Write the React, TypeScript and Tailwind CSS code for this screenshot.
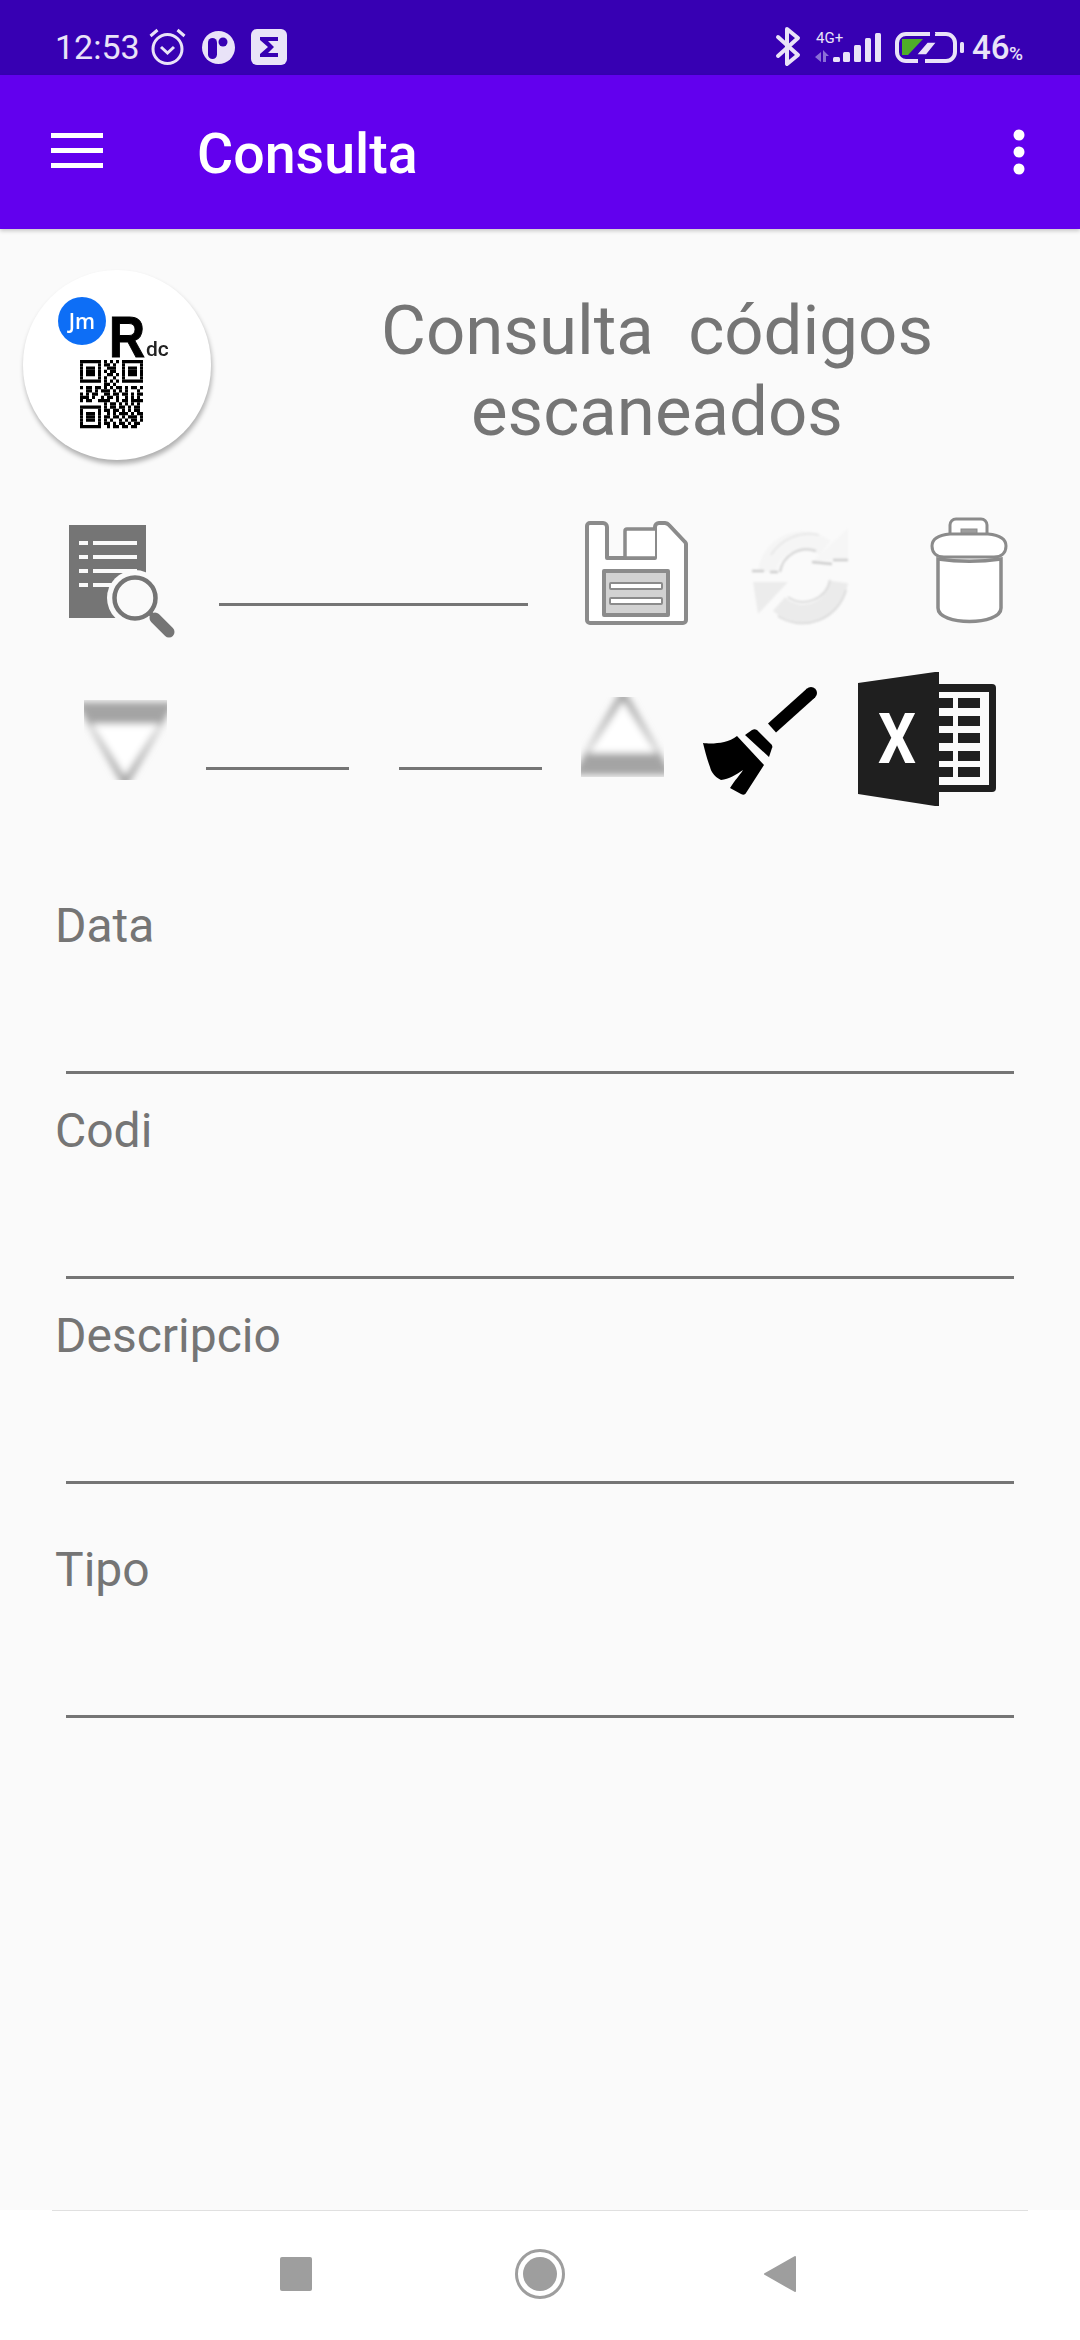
const QR_ROWS = [
  '1111111.1.1.1.1111111',
  '1.....1.11.1..1.....1',
  '1.111.1..111..1.111.1',
  '1.111.1.1.11..1.111.1',
  '1.111.1..11.1.1.111.1',
  '1.....1.1..1..1.....1',
  '1111111.1.1.1.1111111',
  '........11.1.........',
  '1.11.11.1.1.11.1.11.1',
  '..11.1.111.1.1.1...1.',
  '1.1.11..11.11.11.1.11',
  '111.1..1.11.1..1.1.1.',
  '1.11..1111..1.11.1111',
  '........1.11.1.1.1.1.',
  '1111111.1.11.11.1.11.',
  '1.....1.11.11.1.1.11.',
  '1.111.1..1.1.111.1.11',
  '1.111.1.11.11.1.111.1',
  '1.111.1.1.1..1.1.11.1',
  '1.....1.11.1.11.1.11.',
  '1111111..1.11.11.11..',
];

function Logo() {
  return (
    <div className="w-[188px] h-[190px] shrink-0 rounded-full bg-white shadow-[1px_4px_5px_rgba(0,0,0,0.3)]">
      <svg viewBox="23 270 188 190" className="w-full h-full">
        <defs>
          <filter id="logoSoft">
            <feGaussianBlur stdDeviation="0.7" />
          </filter>
        </defs>
        <g filter="url(#logoSoft)">
          <circle cx="82" cy="321" r="24" fill="#0b6ef6" />
          <text x="82" y="329" textAnchor="middle" fontSize="21" fontWeight="600" fill="#fff" fontFamily="Open Sans, sans-serif">Jm</text>
          <text x="109" y="357" fontSize="58" fontWeight="700" fill="#000" textLength="36" lengthAdjust="spacingAndGlyphs" stroke="#000" strokeWidth="1" fontFamily="Liberation Sans, sans-serif">R</text>
          <text x="146" y="356" fontSize="21" fontWeight="500" fill="#222" fontFamily="Roboto, sans-serif">dc</text>
          {QR_ROWS.map((row, y) =>
            row.split('').map((c, x) =>
              c === '1' ? <rect key={`${x}-${y}`} x={80 + x * 3} y={360 + y * 3.25} width="3" height="3.25" fill="#000" /> : null,
            ),
          )}
        </g>
      </svg>
    </div>
  );
}

function StatusLeft() {
  return (
    <div className="flex items-center mt-[8px]">
      <span className="text-[34px] leading-none text-[#e9e3f8]">12:53</span>
      <svg viewBox="0 0 38 38" className="w-[39px] h-[38px] ml-[8px]" fill="none" stroke="#e9e3f8">
        <circle cx="19" cy="21" r="14.5" strokeWidth="3" />
        <path d="M12.5 19l6.5 6 6.5-6" strokeWidth="3" />
        <path d="M2 8l7-6M36 8l-7-6" strokeWidth="3" />
      </svg>
      <svg viewBox="0 0 33 33" className="w-[33px] h-[33px] ml-[15px]">
        <circle cx="16.5" cy="16.5" r="16.5" fill="#e9e3f8" />
        <rect x="6" y="7" width="9" height="21" rx="4.5" fill="#3700b3" />
        <circle cx="21" cy="11" r="4.5" fill="#3700b3" />
      </svg>
      <svg viewBox="0 0 36 36" className="w-[36px] h-[36px] ml-[16px]">
        <rect width="36" height="36" rx="6" fill="#e9e3f8" />
        <path d="M9 8h18v4H17l6 6-6 6h10v4H9v-3l8-7-8-7z" fill="#3700b3" />
      </svg>
    </div>
  );
}

function StatusRight() {
  return (
    <svg viewBox="770 20 260 50" className="w-[260px] h-[50px]">
      <path d="M778 37l20 18-11 9V29l11 9-20 18" fill="none" stroke="#e9e3f8" strokeWidth="4" strokeLinejoin="round" strokeLinecap="round" />
      <text x="816" y="43" fontSize="15" fill="#e9e3f8" fontFamily="Roboto, sans-serif">4G+</text>
      <path d="M815 57l6-5v10zM823 50l6 6h-3v6h-3z" fill="#8a6fd6" />
      <rect x="833" y="57" width="7" height="5" rx="1.5" fill="#e9e3f8" />
      <rect x="843" y="52" width="7" height="10" rx="1.5" fill="#e9e3f8" />
      <rect x="854" y="45" width="7" height="17" rx="1.5" fill="#e9e3f8" />
      <rect x="865" y="38" width="6" height="24" rx="1.5" fill="#e9e3f8" />
      <rect x="875" y="33" width="6" height="29" rx="1.5" fill="#e9e3f8" />
      <path d="M930 34h-24a9 9 0 0 0-9 9v9a9 9 0 0 0 9 9h12M925 61h21a9 9 0 0 0 9-9v-9a9 9 0 0 0-9-9h-11" fill="none" stroke="#e9e3f8" strokeWidth="4" />
      <path d="M902 39h21l-15 16h-6z" fill="#4fae28" />
      <path d="M935 33l-19 22h10l-6 8 17-21h-9z" fill="#e9e3f8" stroke="#3700b3" strokeWidth="1.5" />
      <rect x="960" y="42" width="4" height="11" rx="1.5" fill="#e9e3f8" />
      <text x="972" y="59" fontSize="33" fontWeight="500" fill="#e9e3f8" fontFamily="Roboto, sans-serif">46</text>
      <text x="1009" y="60" fontSize="19" fontWeight="500" fill="#e9e3f8" fontFamily="Roboto, sans-serif">%</text>
    </svg>
  );
}

function SearchDocIcon() {
  return (
    <svg viewBox="69 525 106 115" className="w-[106px] h-[115px] shrink-0">
      <rect x="69" y="525" width="77" height="93" fill="#757575" />
      {[543, 557, 571, 585].map((y) => (
        <g key={y} fill="#fafafa">
          <rect x="79" y={y - 2} width="9" height="4" />
          <rect x="93" y={y - 2} width="44" height="4" />
        </g>
      ))}
      <circle cx="135" cy="598" r="28" fill="#fafafa" />
      <circle cx="135" cy="598" r="20.5" fill="#fafafa" stroke="#757575" strokeWidth="4.5" />
      <path d="M150 613l5 5" stroke="#757575" strokeWidth="5" />
      <path d="M155 618l14 14" stroke="#757575" strokeWidth="11" strokeLinecap="round" />
    </svg>
  );
}

function SaveIcon() {
  return (
    <svg viewBox="584 521 104 106" className="w-[104px] h-[106px] shrink-0" stroke="#8b8b8b" strokeWidth="4" strokeLinejoin="round">
      <defs>
        <filter id="saveSoft">
          <feGaussianBlur stdDeviation="0.5" />
        </filter>
      </defs>
      <g filter="url(#saveSoft)">
        <path d="M590 523h13a4 4 0 0 1 4 4v31h48v-31a4 4 0 0 1 4-4h6a6 6 0 0 1 4 2l16 17a3 3 0 0 1 1 2v76a3 3 0 0 1-3 3h-93a3 3 0 0 1-3-3v-94a3 3 0 0 1 3-3z" fill="#fff" />
        <path d="M655 558h-30v-27a2 2 0 0 1 2-2h28" fill="#fff" strokeWidth="3.5" />
        <rect x="604" y="571" width="64" height="44" fill="#d2d2d2" />
        <rect x="610" y="583" width="52" height="6" rx="1" fill="#fff" strokeWidth="2" />
        <rect x="610" y="598" width="52" height="6" rx="1" fill="#fff" strokeWidth="2" />
      </g>
    </svg>
  );
}

function SyncIcon() {
  return (
    <svg viewBox="750 525 104 102" className="w-[104px] h-[102px] shrink-0">
      <defs>
        <filter id="syncSoft">
          <feGaussianBlur stdDeviation="0.9" />
        </filter>
      </defs>
      <g filter="url(#syncSoft)" fill="none">
        <path d="M767 572a36 36 0 0 1 58-24" stroke="#f5f5f5" strokeWidth="18" />
        <path d="M839 582a36 36 0 0 1-60 22" stroke="#ebebeb" strokeWidth="18" />
        <path d="M848 528v31l-36 3z" fill="#f6f6f6" />
        <path d="M753 582l5 32 30-32z" fill="#ececec" />
        <path d="M752 571h12M770 572h8M812 562l20 2M833 560h15" stroke="#cdcdcd" strokeWidth="2.5" />
        <path d="M771 555a45 45 0 0 1 48-20" stroke="#e8e8e8" strokeWidth="2" />
        <path d="M780 572a27 27 0 0 1 36-21" stroke="#d8d8d8" strokeWidth="2.5" />
        <path d="M830 580a27 27 0 0 1-42 17" stroke="#dcdcdc" strokeWidth="2" />
        <path d="M846 590a45 45 0 0 1-68 26" stroke="#dcdcdc" strokeWidth="2" />
      </g>
    </svg>
  );
}

function TrashIcon() {
  return (
    <svg viewBox="930 517 78 108" className="w-[78px] h-[108px] shrink-0" stroke="#8b8b8b" strokeWidth="3" fill="#fff">
      <path d="M950 535v-10a6 6 0 0 1 6-6h25a6 6 0 0 1 6 6v10" />
      <rect x="961" y="529" width="16" height="6" fill="#9e9e9e" strokeWidth="1" />
      <path d="M932 546c0-7 7-11 18-12h38c11 1 18 5 18 12 0 8-6 11-12 11h-50c-6 0-12-3-12-11z" />
      <path d="M938 559c20 3 43 3 63 0v49c0 18-63 18-63 0z" strokeWidth="3.5" />
    </svg>
  );
}

function BlurTriangle({ up, id }: { up?: boolean; id: string }) {
  return (
    <svg viewBox="0 0 83 80" className={up ? 'w-[83px] h-[80px] shrink-0 rotate-180' : 'w-[83px] h-[80px] shrink-0'}>
      <defs>
        <filter id={id} x="-20%" y="-20%" width="140%" height="140%">
          <feGaussianBlur stdDeviation="3.6" />
        </filter>
      </defs>
      <g filter={`url(#${id})`}>
        <path d="M-8 2h99L41 90z" fill="#a4a4a4" />
        <path d="M7 24h69L41 76z" fill="#fff" />
      </g>
    </svg>
  );
}

function BroomIcon() {
  return (
    <svg viewBox="703 683 114 114" className="w-[114px] h-[114px] shrink-0">
      <path d="M772 728l39-35" stroke="#000" strokeWidth="12" fill="none" />
      <circle cx="811" cy="693" r="6" fill="#000" />
      <path d="M745 735l7-5c2-1 3-1 5 0l14 14c1 1 2 3 1 4l-3 9z" fill="#000" />
      <path d="M703 743c8 1 24 1 34-7l27 29-18 28c-1 2-3 2-5 1l-11-6c5-8 10-13 13-18-7 5-14 9-22 10-6-3-10-8-11-13-3-8-5-16-7-24z" fill="#000" />
    </svg>
  );
}

function ExcelIcon() {
  return (
    <svg viewBox="858 672 138 134" className="w-[138px] h-[134px] shrink-0">
      <path d="M939 684h53a4 4 0 0 1 4 4v100a4 4 0 0 1-4 4h-53z" fill="#1f1f1f" />
      <rect x="939" y="692" width="50" height="93" fill="#fafafa" />
      {[698, 716, 733, 751, 767].map((y) => (
        <g key={y} fill="#1f1f1f">
          <rect x="939" y={y} width="14" height="10" />
          <rect x="958" y={y} width="22" height="10" />
        </g>
      ))}
      <path d="M858 683l77-11h4v134h-4l-77-12z" fill="#1f1f1f" />
      <text x="878" y="763" fontSize="70" fontWeight="700" fill="#fff" textLength="38" lengthAdjust="spacingAndGlyphs" fontFamily="Roboto, sans-serif">X</text>
    </svg>
  );
}

function Field({ label, extraTop }: { label: string; extraTop?: boolean }) {
  return (
    <div className={extraTop ? 'mt-[58px]' : 'mt-[29px]'}>
      <div className="pl-[55px] text-[48px] leading-[56px] text-[#757575]">{label}</div>
      <div className="mt-[117px] ml-[66px] w-[948px] h-[3px] bg-[#757575]" />
    </div>
  );
}

export default function App() {
  return (
    <div className="min-h-[2340px] flex flex-col bg-[#fafafa] font-['Roboto',sans-serif]">
      <div className="h-[75px] shrink-0 bg-[#3700b3] flex items-start justify-between pt-[20px] pl-[55px] pr-[50px]">
        <StatusLeft />
        <StatusRight />
      </div>
      <div className="h-[154px] shrink-0 bg-[#6200ee] flex items-center pl-[51px] pr-[55px] shadow-[0_2px_4px_rgba(0,0,0,0.2)]">
        <svg viewBox="0 0 52 36" className="w-[52px] h-[36px] -mt-[3px]" fill="#fff">
          <rect y="0" width="52" height="5" />
          <rect y="15" width="52" height="5" />
          <rect y="30" width="52" height="5" />
        </svg>
        <span className="ml-[94px] mt-[6px] text-[55.5px] font-medium text-white leading-none">Consulta</span>
        <svg viewBox="0 0 12 46" className="ml-auto w-[12px] h-[46px]" fill="#fff">
          <circle cx="6" cy="6" r="5.5" />
          <circle cx="6" cy="23" r="5.5" />
          <circle cx="6" cy="40" r="5.5" />
        </svg>
      </div>

      <main className="flex-1">
        <div className="flex items-start pt-[41px] pl-[23px]">
          <Logo />
          <h1 className="flex-1 ml-[23px] pt-[20px] text-center text-[69px] leading-[81px] font-normal text-[#757575] whitespace-pre-line">
            <span className="whitespace-pre">Consulta  códigos</span>
            {'\n'}escaneados
          </h1>
        </div>

        <div className="flex items-start mt-[57px] pl-[69px]">
          <div className="mt-[8px]"><SearchDocIcon /></div>
          <div className="ml-[44px] mt-[86px] w-[309px] h-[3px] bg-[#757575]" />
          <div className="ml-[56px] mt-[4px]"><SaveIcon /></div>
          <div className="ml-[62px] mt-[8px]"><SyncIcon /></div>
          <div className="ml-[76px]"><TrashIcon /></div>
        </div>

        <div className="flex items-start mt-[32px] pl-[84px]">
          <div className="mt-[28px]"><BlurTriangle id="triDown" /></div>
          <div className="ml-[39px] mt-[95px] w-[143px] h-[3px] bg-[#757575]" />
          <div className="ml-[50px] mt-[95px] w-[143px] h-[3px] bg-[#757575]" />
          <div className="ml-[39px] mt-[25px]"><BlurTriangle up id="triUp" /></div>
          <div className="ml-[39px] mt-[11px]"><BroomIcon /></div>
          <div className="ml-[41px]"><ExcelIcon /></div>
        </div>

        <div className="mt-[92px]">
          <Field label="Data" />
          <Field label="Codi" />
          <Field label="Descripcio" />
          <Field label="Tipo" extraTop />
        </div>
      </main>

      <nav className="h-[130px] shrink-0 bg-white">
        <div className="mx-[52px] h-[1px] bg-[#e0e0e0]" />
        <div className="flex items-center h-[126px] pl-[280px]">
          <div className="w-[32px] h-[34px] rounded-[2px] bg-[#9e9e9e]" />
          <svg viewBox="0 0 50 50" className="ml-[203px] w-[50px] h-[50px]">
            <circle cx="25" cy="25" r="23.5" fill="none" stroke="#9e9e9e" strokeWidth="3" />
            <circle cx="25" cy="25" r="17" fill="#9e9e9e" />
          </svg>
          <svg viewBox="0 0 34 38" className="ml-[198px] w-[34px] h-[38px]">
            <path d="M32 2L2 19l30 17z" fill="#9e9e9e" stroke="#9e9e9e" strokeWidth="2" strokeLinejoin="round" />
          </svg>
        </div>
      </nav>
    </div>
  );
}
